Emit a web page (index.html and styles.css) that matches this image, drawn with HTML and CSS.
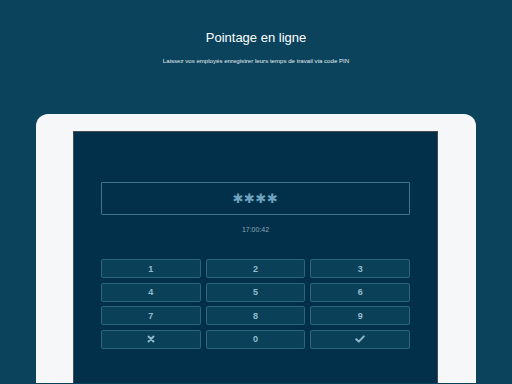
FILE: index.html
```html
<!DOCTYPE html>
<html>
<head>
	<title>Pointage en ligne</title>
	<link rel="stylesheet" href="styles.css">
</head>
<body>

	<div class="page">
		<div class="head">
			<h1 class="title">Pointage en ligne</h1>
			<p class="subtitle">Laissez vos employés enregistrer leurs temps de travail via code PIN</p>
		</div>

		<div class="tablet">
			<div class="screen">
				<div class="pin-box">
					<span class="pin">✱✱✱✱</span>
				</div>
				<div class="clock">17:00:42</div>

				<div class="keypad">
					<button class="key">1</button>
					<button class="key">2</button>
					<button class="key">3</button>
					<button class="key">4</button>
					<button class="key">5</button>
					<button class="key">6</button>
					<button class="key">7</button>
					<button class="key">8</button>
					<button class="key">9</button>
					<button class="key">
						<svg class="key-icon" width="8" height="8" viewBox="0 0 8 8">
							<path d="M1.5 1.5 L6.5 6.5 M6.5 1.5 L1.5 6.5" stroke="#8fb8cc" stroke-width="2" stroke-linecap="round"/>
						</svg>
					</button>
					<button class="key">0</button>
					<button class="key">
						<svg class="key-icon" width="10" height="8" viewBox="0 0 10 8">
							<path d="M1.2 4.2 L3.8 6.6 L8.8 1.4" stroke="#8fb8cc" stroke-width="2" fill="none" stroke-linecap="round" stroke-linejoin="round"/>
						</svg>
					</button>
				</div>
			</div>
		</div>
	</div>

</body>
</html>
```

FILE: styles.css
```css
html, body {
	margin: 0;
	padding: 0;
	height: 100%;
	overflow: hidden;
}
body {
	background-color: #0b435d;
	font-family: "Liberation Sans", Arial, sans-serif;
}
.page {
	display: flex;
	flex-direction: column;
	align-items: center;
}
.head {
	text-align: center;
	color: #fff;
	padding-top: 28px;
}
.title {
	margin: 0;
	font-size: 13px;
	font-weight: normal;
	line-height: 20px;
}
.subtitle {
	margin: 8px 0 0 0;
	font-size: 6.1px;
	line-height: 10px;
	color: #e3ecf1;
}
.tablet {
	margin-top: 48px;
	width: 440px;
	height: 269px;
	box-sizing: border-box;
	padding: 17px 38px 0 37px;
	background-color: #f5f7f9;
	border-radius: 12px 12px 0 0;
	align-self: flex-start;
	margin-left: 36px;
}
.screen {
	height: 100%;
	box-sizing: border-box;
	background-color: #02304a;
	border: 1px solid #474c50;
	border-bottom: none;
	padding: 50px 27px 0 27px;
}
.pin-box {
	height: 31px;
	border: 1px solid #3c7690;
	border-radius: 1px;
	display: flex;
	align-items: center;
	justify-content: center;
}
.pin {
	color: #6fa3be;
	font-family: "DejaVu Sans", sans-serif;
	font-size: 13px;
	font-weight: bold;
	letter-spacing: 0.5px;
}
.clock {
	text-align: center;
	color: #8ba6b5;
	font-size: 7px;
	line-height: 10px;
	margin-top: 10px;
}
.keypad {
	margin-top: 24px;
	display: grid;
	grid-template-columns: repeat(3, 1fr);
	column-gap: 5px;
	row-gap: 4.5px;
}
.key {
	height: 19px;
	padding: 0;
	background-color: #0a4058;
	border: 1px solid #2c6580;
	border-radius: 2px;
	color: #93bccf;
	font-family: "Liberation Sans", Arial, sans-serif;
	font-size: 9px;
	font-weight: bold;
	display: flex;
	align-items: center;
	justify-content: center;
}
.key-icon {
	display: block;
}
```
